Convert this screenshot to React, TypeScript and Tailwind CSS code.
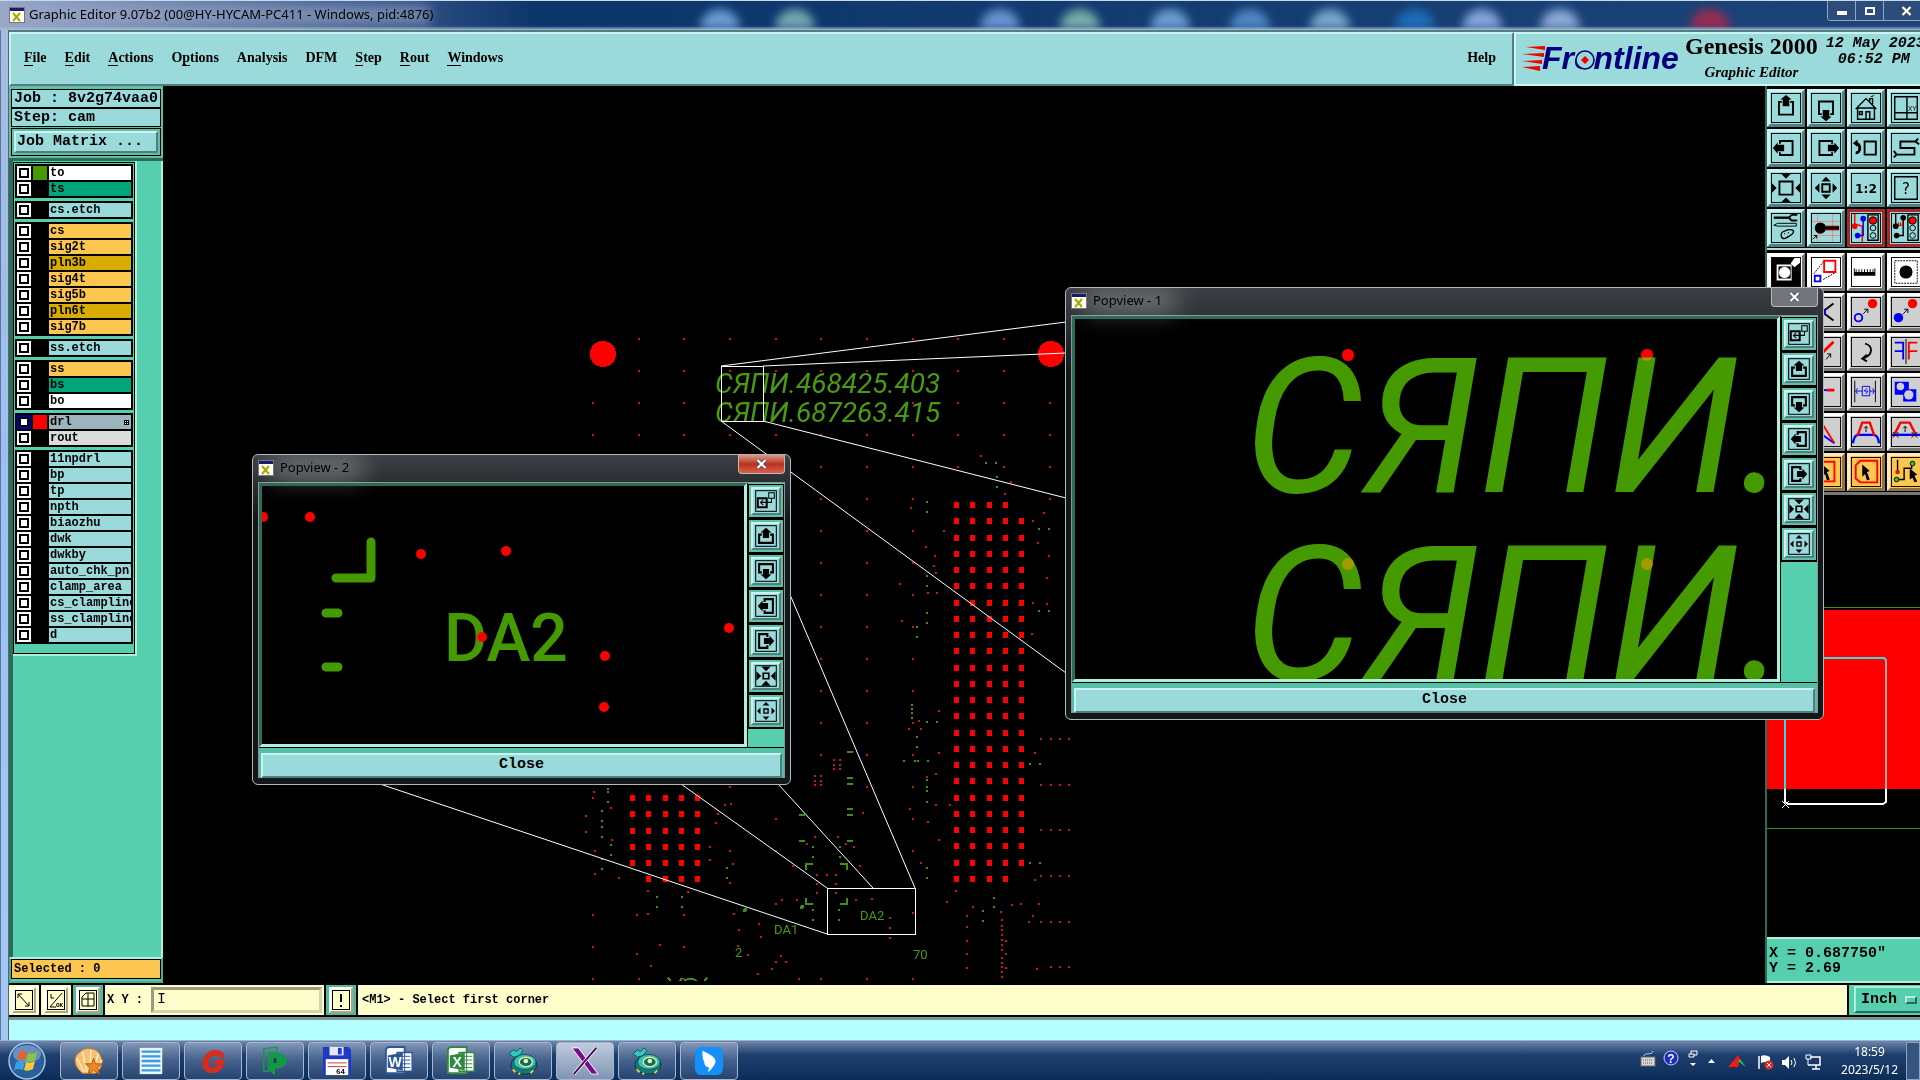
import type { ReactNode } from "react";

const MONO = "font-['Liberation_Mono',monospace] font-bold";
const SERIF = "font-['Liberation_Serif',serif] font-bold";
const SANS = "font-['Noto_Sans',sans-serif]";
const RAISED = "border-2 border-t-[#c8f5f1] border-l-[#c8f5f1] border-r-[#4f7f7f] border-b-[#4f7f7f]";

type Point = [number, number];

/* ---------- board data ---------- */

const RED_DOTS: Point[] = [
  [981, 456], [1011, 482], [1005, 494], [1044, 513], [1033, 521], [1038, 543], [1049, 556], [1047, 578],
  [1033, 603], [1047, 604], [1032, 634], [911, 508], [944, 531], [926, 547], [935, 556], [934, 566],
  [936, 573], [928, 593], [937, 593], [900, 584], [902, 621], [939, 711], [913, 723], [919, 721],
  [909, 729], [921, 729], [939, 753], [936, 774], [927, 777], [910, 809], [936, 805], [950, 805],
  [928, 822], [939, 840], [921, 863], [863, 813], [860, 866], [815, 837], [838, 837], [807, 844],
  [846, 844], [854, 847], [793, 866], [817, 875], [827, 875], [836, 875], [817, 884], [836, 884],
  [817, 893], [836, 893], [834, 760], [840, 760], [834, 765], [840, 765], [834, 769], [840, 769],
  [815, 776], [821, 776], [815, 781], [821, 781], [815, 785], [821, 785], [594, 792], [593, 798],
  [611, 808], [586, 816], [586, 832], [612, 840], [595, 851], [595, 874], [619, 878], [725, 805],
  [731, 804], [718, 814], [716, 823], [710, 847], [710, 860], [730, 851], [733, 864], [730, 883],
  [730, 787], [648, 891], [688, 892], [648, 914], [637, 915], [734, 914], [776, 904], [782, 900],
  [797, 900], [759, 924], [739, 930], [761, 937], [738, 946], [660, 945], [637, 954], [651, 966],
  [748, 955], [781, 956], [776, 962], [786, 962], [772, 969], [758, 974], [799, 979], [856, 900],
  [872, 899], [890, 918], [890, 928], [890, 938], [913, 913], [956, 891], [947, 902], [973, 907],
  [1012, 905], [1021, 904], [1039, 904], [1001, 912], [967, 916], [967, 927], [967, 941], [967, 954],
  [967, 968], [1033, 916], [1029, 922], [1035, 753], [1035, 880], [1037, 969], [1006, 941], [1006, 954],
  [1006, 968], [1002, 920], [1002, 926], [1002, 930], [1002, 935], [1002, 940], [1002, 945], [1002, 950],
  [1002, 958], [1002, 963], [1002, 967], [1002, 972], [1002, 977],
];

const GREEN_DOTS: Point[] = [
  [986, 463], [996, 463], [997, 477], [997, 487], [927, 502], [927, 512], [1039, 529], [1049, 529],
  [927, 576], [927, 586], [927, 613], [927, 623], [917, 627], [917, 637], [1039, 611], [1049, 611],
  [912, 705], [912, 709], [912, 713], [912, 718], [927, 722], [937, 722], [917, 737], [917, 747],
  [904, 761], [915, 761], [918, 761], [928, 761], [927, 780], [927, 787], [927, 791], [927, 802],
  [927, 868], [927, 878], [1030, 764], [1040, 764], [1030, 863], [1040, 863], [994, 898], [994, 907],
  [983, 911], [983, 921], [813, 847], [813, 857], [840, 847], [840, 857], [813, 910], [813, 920],
  [839, 910], [839, 920], [608, 789], [608, 792], [608, 802], [602, 811], [602, 821], [602, 827],
  [602, 837], [611, 845], [611, 855], [602, 859], [602, 869], [727, 868], [727, 878], [657, 897],
  [657, 907], [682, 897], [682, 907],
];

const GREEN_DASHES: Point[] = [
  [850, 752], [850, 778], [850, 784], [850, 809], [850, 815], [850, 841], [802, 815], [802, 841],
];

// via grid: row y -> column x values
const GRID: [number, number[]][] = [
  [339, [639, 684, 730, 776, 821, 867, 913, 958, 1004]],
  [371, [639, 684, 730, 776, 821, 867, 913, 958, 1004]],
  [403, [593, 639, 684, 730, 776, 821, 867, 913, 958, 1004, 1050]],
  [435, [593, 639, 684, 730, 776, 821, 867, 913, 958, 1004, 1050]],
  [467, [821, 867, 913, 958, 1004, 1050]],
  [499, [821, 867, 913, 1050]],
  [531, [821, 867, 913]],
  [563, [821, 867, 913]],
  [595, [821, 867, 913]],
  [627, [821, 867, 913]],
  [659, [821, 867, 913]],
  [691, [821, 867, 913]],
  [723, [821, 867]],
  [755, [821, 867, 913]],
  [787, [867, 913]],
  [819, [776, 913]],
  [851, [776, 913]],
  [915, [593, 684]],
  [947, [593, 684]],
  [979, [593, 639, 684, 821, 867, 913]],
];

const HEADER_ROWS = [739, 785, 830, 876, 922, 967];

const LINES: [number, number, number, number][] = [
  [721, 366, 1066, 322],
  [763, 366, 1066, 353],
  [721, 421, 1066, 673],
  [763, 421, 1066, 498],
  [380, 784, 827, 934],
  [681, 784, 827, 888],
  [778, 784, 873, 888],
  [788, 590, 915, 888],
];

function Board() {
  const pads: Point[] = [];
  for (let r = 0; r < 24; r++) {
    for (let c = 0; c < 5; c++) {
      if (c === 4 && (r === 0 || r === 23)) continue;
      pads.push([956 + Math.round(c * 16.3), 505 + Math.round(r * 16.25)]);
    }
  }
  for (let r = 0; r < 6; r++) {
    for (let c = 0; c < 5; c++) {
      if (c === 0 && r === 5) continue;
      pads.push([632 + Math.round(c * 16.3), 798 + Math.round(r * 16.25)]);
    }
  }
  return (
    <svg className="absolute inset-0 h-full w-full" shapeRendering="crispEdges">
      <g transform="translate(-163 -86)">
        <g fill="#c4161c">
          {GRID.flatMap(([y, xs]) => xs.map((x) => <rect key={`${x}-${y}`} x={x - 1} y={y - 1} width="2" height="2" />))}
          {HEADER_ROWS.flatMap((y, i) =>
            [1041, 1051, 1060, 1069].slice(i === 5 ? 1 : 0).map((x) => (
              <rect key={`${x}-${y}`} x={x - 1} y={y - 1} width="2" height="2" />
            )),
          )}
          {RED_DOTS.map(([x, y]) => (
            <rect key={`${x}-${y}`} x={x - 1} y={y - 1} width="2" height="2" />
          ))}
        </g>
        <g fill="#ff0000">
          {pads.map(([x, y]) => (
            <rect key={`${x}-${y}`} x={x - 2} y={y - 3} width="5" height="6" />
          ))}
          <circle cx="603" cy="354" r="13" />
          <circle cx="1051" cy="354" r="13" />
        </g>
        <g fill="#3f8f10">
          {GREEN_DOTS.map(([x, y]) => (
            <rect key={`${x}-${y}`} x={x - 1} y={y - 1} width="2" height="2" />
          ))}
          {GREEN_DASHES.map(([x, y]) => (
            <rect key={`${x}-${y}`} x={x - 3} y={y - 1} width="6" height="2" />
          ))}
          <circle cx="802" cy="907" r="2" />
          <circle cx="745" cy="910" r="2" />
        </g>
        <g fill="none" stroke="#3f8f10" strokeWidth="2">
          <path d="M813 864h-7v6M840 864h7v6M806 898v6h7M847 898v6h-7" />
          <path d="M668 978l3 3M682 978l-2 3M685 981c2-3 9-3 11 0M704 981l3-3" />
        </g>
        <g fill="#4a9a0e" shapeRendering="auto" className="font-['Roboto',sans-serif]">
          <text x="715" y="393" className="text-[28px] italic">СЯПИ.468425.403</text>
          <text x="715" y="422" className="text-[28px] italic">СЯПИ.687263.415</text>
          <text x="860" y="920" className="text-[13px]">DA2</text>
          <text x="774" y="934" className="text-[13px]">DA1</text>
          <text x="735" y="957" className="text-[13px]">2</text>
          <text x="913" y="959" className="text-[13px]">70</text>
        </g>
        <g fill="none" stroke="#ffffff" strokeWidth="1" shapeRendering="auto">
          {LINES.map(([x1, y1, x2, y2]) => (
            <line key={`${x1}-${y1}-${y2}`} x1={x1} y1={y1} x2={x2} y2={y2} />
          ))}
          <rect x="721.5" y="366.5" width="42" height="55" />
          <rect x="827.5" y="888.5" width="88" height="46" />
        </g>
      </g>
    </svg>
  );
}

/* ---------- tool icons, 32x32 each ---------- */

const arrowBox = (
  <>
    <path d="M11.5 9.5H8.5v13.500h15V9.500h-3" fill="none" stroke="#000" strokeWidth="2" />
    <path d="M16 2l6 5h-2.500v7h-7V7H10z" />
  </>
);

const smallArrowBox = (
  <>
    <path d="M10 14H6v12h20V14h-4" fill="none" stroke="#000" strokeWidth="3" />
    <path d="M16 4l8 7h-3.500v8h-9v-8H8z" />
  </>
);

const ICONS: Record<string, ReactNode> = {
  up: arrowBox,
  down: <g transform="rotate(180 16 16)">{arrowBox}</g>,
  left: <g transform="rotate(270 16 16)">{arrowBox}</g>,
  right: <g transform="rotate(90 16 16)">{arrowBox}</g>,
  popUp: smallArrowBox,
  popDown: <g transform="rotate(180 16 16)">{smallArrowBox}</g>,
  popLeft: <g transform="rotate(270 16 16)">{smallArrowBox}</g>,
  popRight: <g transform="rotate(90 16 16)">{smallArrowBox}</g>,
  popIn: (
    <>
      <path d="M12 12h8v8h-8z" fill="none" stroke="#000" strokeWidth="2.500" />
      <path d="M9 2h14l-7 7zM9 30h14l-7-7zM2 9v14l7-7zM30 9v14l-7-7z" />
    </>
  ),
  popFit: (
    <>
      <path d="M13 13h6v6h-6z" fill="none" stroke="#000" strokeWidth="2" />
      <path d="M11 8h10l-5-5zM11 24h10l-5 5zM8 11v10l-5-5zM24 11v10l5-5z" />
    </>
  ),
  home: (
    <g fill="none" stroke="#000" strokeWidth="1.500">
      <path d="M5 17L16 6l11 11M7 16v12h18V16M7 16h18M16 28v-8h4v8M9 20h3v3H9zM20 9V6h3v6" />
      <path d="M21 4q3 0 3-2" strokeWidth="1" />
    </g>
  ),
  xy: (
    <>
      <path d="M4 4h24v24H4zM4 21h24M17 4v24" fill="none" stroke="#000" strokeWidth="1.500" />
      <text x="18" y="19" className="font-['Liberation_Sans'] text-[7px]">XY</text>
    </>
  ),
  undo: (
    <>
      <path d="M14.500 9h12v14h-12z" fill="none" stroke="#000" strokeWidth="2" />
      <path d="M5 21c5 1 6-8 1-10" fill="none" stroke="#000" strokeWidth="3" />
      <path d="M2 11l5-4v8z" />
    </>
  ),
  snake: (
    <path d="M29 6l-3 3H10v7h15v7H6l-3 3M26 9l4 3M6 23l-3-4" fill="none" stroke="#000" strokeWidth="2" />
  ),
  zoomIn: (
    <>
      <path d="M9 9h14v14H9z" fill="none" stroke="#000" strokeWidth="2" />
      <path d="M11 1h10l-5 5zM11 31h10l-5-5zM1 11v10l5-5zM31 11v10l-5-5z" />
    </>
  ),
  zoomOut: (
    <>
      <path d="M12 12h8v8h-8z" fill="none" stroke="#000" strokeWidth="2" />
      <path d="M11 9h10l-5-5zM11 23h10l-5 5zM9 11v10l-5-5zM23 11v10l5-5z" />
    </>
  ),
  ratio: (
    <text x="16" y="21" textAnchor="middle" className="font-['DejaVu_Sans'] text-[13px] font-bold">1:2</text>
  ),
  help: (
    <>
      <path d="M4 4h24v24H4z" fill="none" stroke="#000" strokeWidth="1.500" />
      <text x="16" y="22" textAnchor="middle" className="font-['DejaVu_Sans'] text-[16px]">?</text>
    </>
  ),
  tools: (
    <g fill="none" stroke="#000">
      <path d="M3 5h17" strokeWidth="2.500" />
      <path d="M28 2h-6l-3 3 3 3h6" strokeWidth="2" />
      <path d="M3 13l4-2h20v3H7z" />
      <path d="M15 19c7-3 12 0 7 4s-10 6-11 2 1-5 4-6zM14 22h1M18 21h1M17 25h1" strokeWidth="1.500" />
    </g>
  ),
  pin: (
    <>
      <path d="M7 1v30M23 1v30M1 9h30M1 24h30" stroke="#e88" fill="none" />
      <circle cx="10" cy="16" r="6" />
      <path d="M15 16h15" stroke="#c00" strokeWidth="5" />
      <path d="M10 16h20" stroke="#000" strokeWidth="3" />
      <path d="M2 28l4-4m-3 0h3v3" stroke="#000" fill="none" />
    </>
  ),
  netColor: (
    <>
      <path d="M4 1v11l8 2v17" stroke="#f00" fill="none" strokeWidth="1.500" />
      <path d="M13 6v18H6" stroke="#00d" fill="none" strokeWidth="1.500" />
      <circle cx="4" cy="14" r="3" fill="#f00" />
      <circle cx="13" cy="6" r="3" fill="#00d" />
      <circle cx="7" cy="24" r="3" fill="#00d" />
      <path d="M18 2h11v27H18z" fill="none" stroke="#000" strokeWidth="1.500" />
      <circle cx="23.500" cy="8" r="4" fill="#f00" stroke="#000" />
      <circle cx="23.500" cy="16" r="3" fill="none" stroke="#000" />
      <circle cx="23.500" cy="24" r="3" fill="none" stroke="#000" />
    </>
  ),
  netBlack: (
    <>
      <path d="M5 1v14M13 5v19H6" stroke="#000" fill="none" strokeWidth="1.500" />
      <path d="M5 13h8M8 10v4M10 10v4M12 10v4" stroke="#d00" fill="none" />
      <circle cx="5" cy="14" r="3" />
      <circle cx="13" cy="5" r="3" />
      <circle cx="6" cy="24" r="3" />
      <path d="M18 2h11v27H18z" fill="none" stroke="#000" strokeWidth="1.500" />
      <circle cx="23" cy="8" r="4" fill="#f00" stroke="#000" />
      <circle cx="23" cy="16" r="3" fill="none" stroke="#000" />
      <circle cx="23" cy="24" r="3" fill="none" stroke="#000" />
    </>
  ),
  mask: (
    <>
      <path d="M1 1h30v30H1z" />
      <path d="M25 1h6v5l-6 5-4-4zM6 8h16v17H6z" fill="#fff" />
      <path d="M8 10h13v13H8z" />
      <circle cx="14.500" cy="16.500" r="6" fill="#fff" />
    </>
  ),
  scale: (
    <>
      <path d="M3 18L14 4M13 24l14-8" stroke="#000" fill="none" strokeDasharray="2 1" />
      <path d="M14 4h12v12H14z" fill="none" stroke="#f00" strokeWidth="2" />
      <path d="M4 20h6v6H4z" fill="none" stroke="#00f" strokeWidth="2" />
    </>
  ),
  ruler: <path d="M3 20V12h1v4h1v-3h1v3h2v-3h1v3h2v-3h1v3h2v-3h1v3h2v-3h1v3h2v-3h1v3h2v-3h1v3h1v-4h1v8z" />,
  pad: (
    <>
      <path d="M4 4h24v24H4z" fill="none" stroke="#000" strokeDasharray="2 1" />
      <circle cx="16" cy="16" r="7" />
    </>
  ),
  cross: (
    <>
      <path d="M7 16h9" stroke="#00f" strokeWidth="4" />
      <path d="M12 16l12-9M12 16l12 9" stroke="#000" strokeWidth="2" />
      <circle cx="12" cy="16" r="4" fill="#00f" />
    </>
  ),
  copyOpen: (
    <>
      <circle cx="23" cy="7" r="5" fill="#f00" />
      <circle cx="8" cy="22" r="4" fill="none" stroke="#00f" strokeWidth="2" />
      <path d="M13 18l5-5m-4 0h4v4" stroke="#000" fill="none" />
    </>
  ),
  copyFill: (
    <>
      <circle cx="23" cy="7" r="5" fill="#f00" />
      <circle cx="8" cy="22" r="5" fill="#00f" />
      <path d="M13 18l5-5m-4 0h4v4" stroke="#000" fill="none" />
    </>
  ),
  slash: (
    <>
      <path d="M10 19L24 5" stroke="#f00" strokeWidth="3" />
      <path d="M16 24l5-6m-4 0h4v4" stroke="#000" fill="none" />
    </>
  ),
  rotate: <path d="M15 7c9 2 9 13-3 16m5-4l-5 4 5 3" fill="none" stroke="#000" strokeWidth="2" />,
  mirror: (
    <>
      <path d="M4 6h9v18M4 15h9" fill="none" stroke="#00f" strokeWidth="2" />
      <path d="M16 2v27" stroke="#000" />
      <path d="M28 6h-9v18M19 15h9" fill="none" stroke="#f00" strokeWidth="2" />
    </>
  ),
  bar: (
    <>
      <path d="M2 14h16" stroke="#00f" strokeWidth="2" />
      <path d="M17 14h8" stroke="#f00" strokeWidth="3" />
    </>
  ),
  stretch: (
    <g fill="none" stroke="#00f">
      <path d="M4 4v23M26 4v23" stroke="#000" />
      <path d="M12 10h8v10h-8zM5 15h7M20 15h5M7 12l-2 3 2 3M23 12l2 3-2 3M17 12l-3 3h4l-2 3" />
    </g>
  ),
  union: (
    <>
      <path d="M4 5h15v8h8v13H13v-7H4z" fill="#00f" />
      <circle cx="10" cy="10" r="4" fill="#cfcfcf" />
      <circle cx="19" cy="19" r="5" fill="#cfcfcf" />
    </>
  ),
  slope: (
    <>
      <path d="M5 14L25 28" stroke="#00f" strokeWidth="2" />
      <path d="M10 4l15 24" stroke="#f00" strokeWidth="2" />
    </>
  ),
  arch: (
    <>
      <path d="M2 28c1-7 3-9 6-9h16c3 0 5 2 6 9" fill="none" stroke="#00f" strokeWidth="2.500" />
      <path d="M7 20l5-14h8l5 14" fill="none" stroke="#f00" strokeWidth="2.500" />
      <path d="M16 16v-6m-2 2l2-2 2 2" stroke="#000" fill="none" />
    </>
  ),
  archLine: (
    <>
      <path d="M1 19h30" stroke="#00f" strokeWidth="2.500" />
      <path d="M4 18l6-12h10l6 12" fill="none" stroke="#f00" strokeWidth="2.500" />
      <path d="M15 16v-6m-2 2l2-2 2 2M2 16l6 6M8 16l-6 6M22 16l6 6M28 16l-6 6" stroke="#000" fill="none" />
    </>
  ),
  pickBox: (
    <>
      <path d="M5 5h20v21H5z" fill="none" stroke="#f00" strokeWidth="2" />
      <path d="M12 8l8 7-3 1 3 8-3 1-2-7-3 3z" />
    </>
  ),
  pickPoly: (
    <>
      <path d="M10 4h18v23H10l-5-4V9z" fill="none" stroke="#f00" strokeWidth="2" />
      <path d="M12 8l8 7-3 1 3 8-3 1-2-7-3 3z" />
    </>
  ),
  pickNet: (
    <>
      <path d="M7 3v12M6 24h8V12h8V7" fill="none" stroke="#000" strokeWidth="1.500" />
      <circle cx="7" cy="16" r="2.500" fill="#c22" />
      <circle cx="6" cy="24" r="2.500" fill="#2c2" stroke="#000" />
      <circle cx="23" cy="7" r="2.500" fill="#2c2" stroke="#000" />
      <path d="M20 12l8 7-3 1 3 6-3 1-2-5-3 2z" />
    </>
  ),
  popOut: (
    <g fill="none" stroke="#000" strokeWidth="2">
      <path d="M4 12h13v13H4z" strokeWidth="3" />
      <path d="M20 4h8v8h-8zM16 18h8v-6M8 18h8M12 14l-4 4 4 4" strokeWidth="1.500" />
    </g>
  ),
};

type Tone = "cyan" | "alert" | "white" | "grey" | "orange";

const TONES: Record<Tone, string> = {
  cyan: "bg-[#9bdada] border-t-[#c8f5f1] border-l-[#c8f5f1] border-r-[#4f7f7f] border-b-[#4f7f7f]",
  alert: "bg-[#9bdada] border-[#a82828]",
  white: "bg-white border-t-white border-l-white border-r-[#777] border-b-[#777]",
  grey: "bg-[#cfcfcf] border-t-white border-l-white border-r-[#777] border-b-[#777]",
  orange: "bg-[#fdc650] border-t-[#ffe9bb] border-l-[#ffe9bb] border-r-[#8e7340] border-b-[#8e7340]",
};

function ToolButton({ icon, tone = "cyan" }: { icon: string; tone?: Tone }) {
  return (
    <button aria-label={icon} className={`flex h-[38px] w-[38px] items-center justify-center border-3 ${TONES[tone]}`}>
      <svg width="30" height="30" viewBox="0 0 32 32">
        <rect x="0.5" y="0.5" width="31" height="31" fill="none" stroke="#000" />
        {ICONS[icon]}
      </svg>
    </button>
  );
}

const TOP_TOOLS: [string, Tone][] = [
  ["up", "cyan"], ["down", "cyan"], ["home", "cyan"], ["xy", "cyan"],
  ["left", "cyan"], ["right", "cyan"], ["undo", "cyan"], ["snake", "cyan"],
  ["zoomIn", "cyan"], ["zoomOut", "cyan"], ["ratio", "cyan"], ["help", "cyan"],
  ["tools", "cyan"], ["pin", "cyan"], ["netColor", "alert"], ["netBlack", "alert"],
];

const EDIT_TOOLS: [string, Tone][] = [
  ["mask", "white"], ["scale", "white"], ["ruler", "white"], ["pad", "white"],
  ["copyOpen", "grey"], ["cross", "grey"], ["copyOpen", "grey"], ["copyFill", "grey"],
  ["slash", "grey"], ["slash", "grey"], ["rotate", "grey"], ["mirror", "grey"],
  ["bar", "grey"], ["bar", "grey"], ["stretch", "grey"], ["union", "grey"],
  ["slope", "grey"], ["slope", "grey"], ["arch", "grey"], ["archLine", "grey"],
  ["pickBox", "orange"], ["pickBox", "orange"], ["pickPoly", "orange"], ["pickNet", "orange"],
];

/* ---------- title bar and menus ---------- */

function AppIcon() {
  return (
    <svg width="16" height="16" viewBox="0 0 16 16" className="shrink-0">
      <rect x="0.5" y="0.5" width="15" height="15" fill="#fffff4" stroke="#777" />
      <rect x="1" y="1" width="14" height="3" fill="#1a1a6e" />
      <path d="M4 6l7 8M11 6l-7 8" stroke="#a8a800" strokeWidth="2" />
    </svg>
  );
}

const BLOBS = [
  "left-[700px] bg-[#7fb4e8]", "left-[775px] bg-[#8fc0c0]", "left-[980px] bg-[#7fa8e8]",
  "left-[1060px] bg-[#8fc8b8]", "left-[1150px] bg-[#7fb4e8]", "left-[1230px] bg-[#5f98d8]",
  "left-[1310px] bg-[#8fc0e0]", "left-[1395px] bg-[#1f78c8]", "left-[1462px] bg-[#a0bcf8]",
  "left-[1540px] bg-[#a8c4f0]", "left-[1690px] bg-[#b82848]",
];

function TitleBar() {
  return (
    <header className="relative flex h-[30px] shrink-0 items-center overflow-hidden border-t border-[#c8d8ee] bg-linear-to-r from-[#9aa8c8] via-[#0c356c] via-28% to-[#1c4478] pb-[2px] pl-[9px]">
      <i className="absolute top-1 left-0 h-5 w-[430px] bg-[#9aa8c8]/60 blur-[6px]" />
      {BLOBS.map((b) => (
        <i key={b} className={`absolute top-2 h-5 w-10 rounded-t-full opacity-80 blur-[5px] ${b}`} />
      ))}
      <i className="absolute bottom-0 left-0 h-1 w-full bg-linear-to-b from-transparent to-[#a9bcd8]" />
      <div className="relative flex items-center gap-1">
        <AppIcon />
        <span className={`${SANS} text-[13px] text-black`}>
          Graphic Editor 9.07b2 (00@HY-HYCAM-PC411 - Windows, pid:4876)
        </span>
      </div>
      <div className="relative ml-auto flex h-5 self-start overflow-hidden rounded-bl border border-t-0 border-r-0 border-[#8fa6c8] text-white">
        <button aria-label="Minimize" className="flex w-7 items-center justify-center border-r border-[#8fa6c8] bg-[#2c4c7c]">
          <i className="mt-1 h-1 w-2.5 bg-white" />
        </button>
        <button aria-label="Restore" className="flex w-7 items-center justify-center border-r border-[#8fa6c8] bg-[#2c4c7c]">
          <i className="h-2 w-2.5 border-2 border-white" />
        </button>
        <button aria-label="Close window" className="flex w-9 items-center justify-center bg-[#2c4c7c] pl-2">
          <CloseMark />
        </button>
      </div>
    </header>
  );
}

function CloseMark() {
  return (
    <svg width="11" height="10" viewBox="0 0 11 10">
      <path d="M1.500 1l8 8M9.500 1l-8 8" stroke="#445" strokeWidth="3.500" />
      <path d="M1.500 1l8 8M9.500 1l-8 8" stroke="#fff" strokeWidth="2.200" />
    </svg>
  );
}

const MENUS: [string, string, string][] = [
  ["", "F", "ile"], ["", "E", "dit"], ["", "A", "ctions"], ["O", "p", "tions"], ["Analysis", "", ""],
  ["DFM", "", ""], ["", "S", "tep"], ["", "R", "out"], ["", "W", "indows"],
];

function MenuBar() {
  return (
    <div className="flex h-[56px] shrink-0 bg-[#4f7f7f] pt-[2px]">
      <nav className={`${SERIF} flex flex-1 items-center bg-[#9bdada] text-[14px] leading-4 ${RAISED} pr-4 pb-[2px] pl-[13px]`}>
        <div className="flex items-center gap-[18px]">
          {MENUS.map(([pre, key, post]) => (
            <button key={pre + key + post}>
              {pre}
              {key && <span className="border-b border-black">{key}</span>}
              {post}
            </button>
          ))}
        </div>
        <button className="ml-auto">Help</button>
      </nav>
      <div className={`flex w-[406px] shrink-0 overflow-hidden bg-[#9bdada] pl-[5px] ${RAISED} border-r-0 border-b-[#c8f5f1]`}>
        <svg width="164" height="50" viewBox="0 0 164 50" className="shrink-0" aria-label="Frontline">
          <path d="M5 13l19-1v4zM1 20l22-1v4zM1 27l20-1v4zM1 33l18-1v5z" fill="#f00000" />
          <text x="21" y="35" fill="#00007e" className="font-['Liberation_Sans'] text-[32px] font-bold italic">
            Frontline
          </text>
          <circle cx="64" cy="26" r="9" fill="#9bdada" stroke="#00007e" strokeWidth="1.500" />
          <path d="M64 22l4 4-4 4-4-4z" fill="#f00000" />
        </svg>
        <div className={`${SERIF} flex shrink-0 flex-col items-center whitespace-nowrap`}>
          <span className="text-2xl leading-6">Genesis 2000</span>
          <span className="text-[15px] leading-7 italic">Graphic Editor</span>
        </div>
        <div className={`${MONO} ml-2 w-[100px] shrink-0 pt-[2px] text-[15px] leading-4 whitespace-nowrap italic`}>
          <p>12 May 2023</p>
          <p className="pl-3">06:52 PM</p>
        </div>
      </div>
    </div>
  );
}

/* ---------- layer list ---------- */

type Layer = { name: string; bg: string; swatch?: string; active?: boolean };

const CYAN = "bg-[#9bdada]";
const AMBER = "bg-[#fdc650]";
const GOLD = "bg-[#d8ac00]";
const TEAL = "bg-[#00a57b]";

const LAYER_GROUPS: Layer[][] = [
  [{ name: "to", bg: "bg-white", swatch: "bg-[#449a00]" }, { name: "ts", bg: TEAL }],
  [{ name: "cs.etch", bg: CYAN }],
  [
    { name: "cs", bg: AMBER },
    { name: "sig2t", bg: AMBER },
    { name: "pln3b", bg: GOLD },
    { name: "sig4t", bg: AMBER },
    { name: "sig5b", bg: AMBER },
    { name: "pln6t", bg: GOLD },
    { name: "sig7b", bg: AMBER },
  ],
  [{ name: "ss.etch", bg: CYAN }],
  [{ name: "ss", bg: AMBER }, { name: "bs", bg: TEAL }, { name: "bo", bg: "bg-white" }],
  [
    { name: "drl", bg: "bg-[#9cb4be]", swatch: "bg-[#ff0000]", active: true },
    { name: "rout", bg: "bg-[#dcdcdc]" },
  ],
  ["11npdrl", "bp", "tp", "npth", "biaozhu", "dwk", "dwkby", "auto_chk_pnl", "clamp_area", "cs_clampline", "ss_clampline", "d"].map(
    (name) => ({ name, bg: CYAN }),
  ),
];

function LayerRow({ layer }: { layer: Layer }) {
  return (
    <label className="flex h-4 items-center gap-[2px] px-px">
      <span className={`flex h-[14px] w-[14px] shrink-0 items-center justify-center ${layer.active ? "bg-[#0000a0]" : "bg-white"}`}>
        <input type="checkbox" className="h-[10px] w-[10px] appearance-none border-2 border-black bg-white" />
      </span>
      <span className={`h-[14px] w-[14px] shrink-0 ${layer.swatch ?? "bg-black"}`} />
      <span className={`${MONO} h-[14px] flex-1 overflow-hidden pl-px text-xs leading-[14px] whitespace-nowrap ${layer.bg}`}>
        {layer.name}
      </span>
      {layer.active && (
        <svg width="5" height="5" viewBox="0 0 5 5" className="-ml-[9px] mr-[2px] shrink-0">
          <rect width="5" height="5" fill="#000" />
          <path d="M1 1h1v1H1zM3 1h1v1H3zM1 3h1v1H1zM3 3h1v1H3z" fill="#dde" />
        </svg>
      )}
    </label>
  );
}

function LeftPanel() {
  return (
    <aside className={`${MONO} flex w-[154px] shrink-0 flex-col bg-[#55cfae] text-[15px]`}>
      <div className="flex flex-col gap-px border-b-3 border-[#2c6a5a] bg-[#62bfa6] p-[2px] pt-[3px]">
        <div className="border border-black bg-[#9bdada]">
          <p className="h-[19px] border-b-2 border-black pl-[2px] leading-[18px] whitespace-nowrap">Job : 8v2g74vaa0</p>
          <p className="h-[17px] pl-[2px] leading-[18px]">Step: cam</p>
        </div>
        <div className="border border-black p-[2px]">
          <button className={`block h-[22px] w-full bg-[#9bdada] pl-px text-left leading-[18px] whitespace-nowrap ${RAISED}`}>
            Job Matrix ...
          </button>
        </div>
      </div>
      <div className="flex flex-1 flex-col items-start border-r-2 border-l-4 border-r-[#b0efdc] border-l-[#2c6a5a]">
        <div className="border-r-2 border-b-2 border-[#b0efdc] pt-px">
          <div className="flex w-[122px] flex-col gap-[3px] border border-black px-px pt-px pb-[9px]">
            {LAYER_GROUPS.map((group) => (
              <div key={group[0].name} className="border border-black bg-black">
                {group.map((layer) => (
                  <LayerRow key={layer.name} layer={layer} />
                ))}
              </div>
            ))}
          </div>
        </div>
      </div>
      <div className="h-[26px] border-2 border-t-[#b0efdc] border-[#55a890] pb-[2px]">
        <p className="h-5 border border-black bg-[#fdc650] pl-[2px] text-xs leading-[18px]">Selected : 0</p>
      </div>
    </aside>
  );
}

function RightPanel() {
  return (
    <aside className="flex w-[155px] shrink-0 flex-col overflow-hidden border-l-2 border-[#2c6a5a] bg-black">
      <div className="grid shrink-0 grid-cols-[repeat(4,38px)] gap-[2px] bg-black pt-[3px]">
        {TOP_TOOLS.map(([icon, tone], i) => (
          <ToolButton key={i} icon={icon} tone={tone} />
        ))}
      </div>
      <div className="mt-px grid shrink-0 grid-cols-[repeat(4,38px)] gap-[2px] border-t-2 border-b-3 border-t-[#b8d8d4] border-b-[#777] bg-black pt-[3px] pb-px">
        {EDIT_TOOLS.map(([icon, tone], i) => (
          <ToolButton key={i} icon={icon} tone={tone} />
        ))}
      </div>
      <svg className="min-h-0 w-full flex-1" viewBox="1767 520 153 416" preserveAspectRatio="xMinYMax meet" overflow="visible">
        <rect x="1767" y="609" width="153" height="179" fill="#ff0000" />
        <path d="M1767 606.500h153M1767 827.500h153" stroke="#3f8f10" />
        <g fill="none" strokeWidth="2">
          <path d="M1785 788V657h99l2 2v129" stroke="#3fd8d8" />
          <path d="M1886 660v128" stroke="#a8a8a8" />
          <path d="M1785 788v13l3 2h95l3-2v-13" stroke="#ffffff" />
        </g>
        <path d="M1782 800l7 7M1789 800l-7 7" stroke="#ffffff" />
      </svg>
      <div className={`${MONO} h-[46px] shrink-0 border-y-2 border-[#b0efdc] bg-[#55cfae] pt-[7px] pl-[2px] text-[15px] leading-[15px] whitespace-pre`}>
        <p>X = 0.687750"</p>
        <p>Y = 2.69</p>
      </div>
    </aside>
  );
}

/* ---------- pop-up views ---------- */

const POP_TOOLS = ["popOut", "popUp", "popDown", "popLeft", "popRight", "popIn", "popFit"];

type PopviewProps = { title: string; frame: string; closeClass: string; children: ReactNode };

function Popview({ title, frame, closeClass, children }: PopviewProps) {
  return (
    <section
      className={`absolute flex flex-col overflow-hidden rounded-md border border-[#b4b8bc] bg-linear-to-b from-[#3c4044] to-[#14171a] to-20% px-[5px] pb-[6px] ${frame}`}
    >
      <i className="absolute top-1 left-4 h-5 w-24 rounded-full bg-white/35 blur-md" />
      <div className="relative flex h-[27px] shrink-0 items-center gap-1.5 pb-[2px]">
        <AppIcon />
        <h2 className={`${SANS} text-[13px] text-black`}>{title}</h2>
        <button
          aria-label={`Close ${title}`}
          className={`ml-auto flex h-[19px] w-[47px] items-center justify-center self-start rounded-b border border-t-0 border-[#c0b8b8] ${closeClass}`}
        >
          <CloseMark />
        </button>
      </div>
      <div className="flex min-h-0 flex-1 flex-col border border-[#8c9494] bg-black">
        <div className="flex min-h-0 flex-1">
          <div className="relative min-w-0 flex-1 border-3 border-t-[#2c6a5a] border-r-[#b0efdc] border-b-[#b0efdc] border-l-[#2c6a5a]">
            {children}
          </div>
          <div className="ml-px flex w-[36px] shrink-0 flex-col bg-[#55cfae] pt-px">
            {POP_TOOLS.map((icon) => (
              <div key={icon} className="h-[35px] border border-b-2 border-black bg-[#62bfa6] p-[2px]">
                <button
                  aria-label={`${title} ${icon}`}
                  className={`flex h-full w-full items-center justify-center bg-[#9bdada] ${RAISED}`}
                >
                  <svg width="22" height="22" viewBox="0 0 32 32">
                    <rect x="1" y="1" width="30" height="30" fill="none" stroke="#000" strokeWidth="1.500" />
                    {ICONS[icon]}
                  </svg>
                </button>
              </div>
            ))}
          </div>
        </div>
        <div className="mt-px h-[29px] shrink-0 bg-[#55bfa6] p-[2px]">
          <button className={`${MONO} h-full w-full bg-[#9bdada] text-[15px] leading-5 ${RAISED}`}>Close</button>
        </div>
      </div>
    </section>
  );
}

const HITS_1: Point[] = [[1347, 355], [1646, 355], [1347, 564], [1646, 564]];
const HITS_2: Point[] = [[263, 517], [310, 517], [421, 554], [506, 551], [729, 628], [605, 656], [604, 707], [482, 637]];

function LegendView() {
  return (
    <svg className="absolute inset-0 h-full w-full">
      <g transform="translate(-1074 -319)">
        {HITS_1.map(([x, y]) => (
          <circle key={`${x}-${y}`} cx={x} cy={y} r="6" fill="#ff0000" />
        ))}
        <g fill="#449a00" className="font-['Roboto',sans-serif] text-[188px] italic">
          <text x="1243" y="492">СЯПИ.</text>
          <text x="1243" y="680">СЯПИ.</text>
        </g>
        {HITS_1.map(([x, y]) => (
          <circle key={`${x}-${y}`} cx={x} cy={y} r="6" fill="#800000" className="mix-blend-screen" />
        ))}
      </g>
    </svg>
  );
}

function DetailView() {
  return (
    <svg className="absolute inset-0 h-full w-full">
      <g transform="translate(-262 -486)">
        <path d="M371 542v36h-35" fill="none" stroke="#449a00" strokeWidth="9" strokeLinecap="round" strokeLinejoin="round" />
        <path d="M326 613h12M326 667h12" stroke="#449a00" strokeWidth="9" strokeLinecap="round" />
        <text x="444" y="661" fill="#449a00" className="font-['Roboto',sans-serif] text-[66px] font-medium">
          DA2
        </text>
        {HITS_2.map(([x, y]) => (
          <circle key={`${x}-${y}`} cx={x} cy={y} r="5" fill="#ff0000" />
        ))}
      </g>
    </svg>
  );
}

/* ---------- status row ---------- */

function StatusIcon({ label, active, children }: { label: string; active?: boolean; children: ReactNode }) {
  return (
    <div className={`flex items-center border-r-2 border-black px-[3px] ${active ? "bg-[#55b89c]" : ""}`}>
      <button aria-label={label} className="border-2 border-t-white border-l-white border-r-[#a8a888] border-b-[#a8a888] bg-[#fefecd]">
        <svg width="20" height="22" viewBox="0 0 20 22" fill="none" stroke="#000">
          <rect x="1.5" y="1.5" width="17" height="19" />
          {children}
        </svg>
      </button>
    </div>
  );
}

function StatusRow() {
  return (
    <div className={`${MONO} flex h-[34px] shrink-0 border-y-2 border-black bg-[#fefecd] text-xs`}>
      <StatusIcon label="Diagonal">
        <path d="M4 5l11 12M4 9V5h4M15 13v4h-4" />
      </StatusIcon>
      <StatusIcon label="Angle">
        <path d="M16 4L4 18h6M5 5v4h3" />
        <text x="10" y="18" fill="#000" stroke="none" className="text-[6px]">OK</text>
      </StatusIcon>
      <StatusIcon label="Snap" active>
        <path d="M4 10h12M10 4v14M4 17h12M16 4v13M4 8l4-4h8M4 8v9" />
      </StatusIcon>
      <label htmlFor="xy" className="w-[46px] pl-[2px] text-xs leading-[30px] whitespace-nowrap">X Y :</label>
      <input
        id="xy"
        className="my-[2px] w-[171px] border-3 border-t-[#9c9c7c] border-l-[#9c9c7c] border-r-[#d4d4ac] border-b-[#d4d4ac] bg-[#fefecd] px-[3px] text-[15px] font-normal"
        defaultValue="I"
      />
      <div className="ml-[2px] flex border-l-2 border-black">
        <StatusIcon label="Alert" active>
          <path d="M10 5v8M10 16v2" strokeWidth="2" />
        </StatusIcon>
      </div>
      <p className="flex-1 pl-1 leading-[30px]">&lt;M1&gt; - Select first corner</p>
      <div className="relative w-[73px] overflow-hidden border-l-2 border-black bg-[#55cfae] pt-px pl-[5px]">
        <select
          aria-label="Units"
          className="h-[27px] w-[80px] appearance-none border-2 border-t-[#b0efdc] border-l-[#b0efdc] border-b-[#2c6a5a] border-r-[#2c6a5a] bg-[#55cfae] pl-[5px] text-[15px] leading-5"
        >
          <option>Inch</option>
          <option>MM</option>
        </select>
        <i className="pointer-events-none absolute top-[11px] left-[56px] h-2 w-3 border-2 border-t-[#b0efdc] border-l-[#b0efdc] border-r-[#2c6a5a] border-b-[#2c6a5a]" />
      </div>
    </div>
  );
}

/* ---------- taskbar ---------- */

const gadget = (
  <>
    <ellipse cx="17" cy="20" rx="14" ry="10" fill="#137a78" stroke="#08383c" />
    <ellipse cx="18" cy="17" rx="12" ry="8" fill="#38c0b4" stroke="#0a5458" />
    <ellipse cx="19" cy="17" rx="7" ry="5" fill="#0d6a70" stroke="#f0e890" strokeWidth="1.500" />
    <circle cx="19" cy="16" r="2.500" fill="#e8f4a0" />
    <path d="M1 8l5-4 3 2 4-4 3 3-4 5-6 2z" fill="#34c8bc" stroke="#0a5458" />
    <path d="M5 25l3 3M11 29l2 1M27 26l-3 3" stroke="#f0c840" strokeWidth="2" />
  </>
);

const officeGrid = (color: string, letter: string) => (
  <>
    <path d="M2 5q0-4 4-4h16v28H2z" fill="#fff" stroke={color} strokeWidth="2" />
    <path d="M14 7h16v20H14z" fill="#fff" stroke={color} strokeWidth="1.500" />
    <path d="M17 11h11M17 15h11M17 19h11M17 23h11M22 7v20" stroke={color} />
    <path d="M4 10l16-3v19L4 23z" fill={color} />
    <text x="12" y="22" textAnchor="middle" fill="#fff" className="font-['Liberation_Sans'] text-[15px] font-bold">
      {letter}
    </text>
  </>
);

const TASKS: { name: string; active?: boolean; icon: ReactNode }[] = [
  {
    name: "Shell",
    icon: (
      <>
        <path d="M9 29C-2 20 0 10 6 7c3-4 8-5 11-4 6 0 9 3 11 7 4 6 2 14-5 19z" fill="#f8c070" stroke="#c87828" />
        <path d="M11 28L3 13M14 28L9 6M17 28l1-24M20 28l6-20M22 28l8-13" stroke="#fff0d0" strokeWidth="1.500" />
        <path d="M21 13l2 6 7 0-5 4 2 7-6-4-6 4 2-7-5-4h7z" fill="#f08828" stroke="#b85808" />
      </>
    ),
  },
  {
    name: "Notes",
    icon: (
      <>
        <path d="M4 2h24v28H4z" fill="#eaf6ff" />
        <path d="M6 6h20M6 11h20M6 16h20M6 21h20M6 26h20" stroke="#3f9ad8" strokeWidth="2.500" />
      </>
    ),
  },
  {
    name: "Genesis",
    icon: (
      <text x="16" y="29" textAnchor="middle" fill="#d82c20" className="font-['Inter'] text-[34px] font-black italic">
        G
      </text>
    ),
  },
  {
    name: "Pcb",
    icon: (
      <>
        <path d="M4 3l14-2v6H9v20H4z" fill="none" stroke="#159a4a" strokeWidth="1.500" />
        <path d="M10 8c20-6 26 16 6 16v7l-6-4z" fill="#149848" />
        <path d="M16 13v5" stroke="#1c3c60" strokeWidth="3" />
      </>
    ),
  },
  {
    name: "Commander",
    icon: (
      <>
        <path d="M1 1h27l3 3v27H1z" fill="#2038c8" />
        <path d="M8 1h15v9H8z" fill="#e8e8f0" />
        <path d="M17 2h4v7h-4z" fill="#2038c8" />
        <path d="M4 14h24v17H4z" fill="#fff" />
        <path d="M6 18h20M6 22h20" stroke="#c03030" />
        <text x="15" y="30" className="font-['Liberation_Mono'] text-[8px] font-bold">64</text>
      </>
    ),
  },
  { name: "Word", icon: officeGrid("#2b579a", "W") },
  { name: "Excel", icon: officeGrid("#2e8b3e", "X") },
  { name: "Toolkit", icon: gadget },
  {
    name: "X server",
    active: true,
    icon: (
      <>
        <path d="M2 2h7l21 28h-7z" fill="#7a0c8c" stroke="#fff" />
        <path d="M28 2L4 30" stroke="#fff" strokeWidth="3.500" />
        <path d="M28 2L4 30" stroke="#4a0658" strokeWidth="2" />
      </>
    ),
  },
  { name: "Toolkit 2", icon: gadget },
  {
    name: "DingTalk",
    icon: (
      <>
        <rect x="1" y="1" width="30" height="30" rx="7" fill="#1590fa" />
        <path d="M9 5c8 4 14 6 14 12-1 3-2 4-4 7l-4 4 1-5c-4-1-5-3-5-6-2-3-2-7-2-12z" fill="#fff" />
      </>
    ),
  },
];

function Taskbar() {
  return (
    <footer className="flex h-10 shrink-0 items-center border-t border-[#9fb2cc] bg-linear-to-b from-[#6f87ac] via-[#1e3f6e] via-35% to-[#0c2c58]">
      <button aria-label="Start" className="ml-2 shrink-0">
        <svg width="38" height="38" viewBox="0 0 38 38">
          <circle cx="19" cy="19" r="18" fill="#2a5f9c" stroke="#9cc4e8" strokeWidth="1.500" />
          <ellipse cx="19" cy="12" rx="14" ry="9" fill="#fff" opacity="0.3" />
          <path d="M11 11q4-3 8-1l-2 8q-4-2-8 0z" fill="#e8602c" />
          <path d="M20 11q4 2 9-1l-2 8q-5 3-9 1z" fill="#8cc43c" />
          <path d="M8 20q5-2 9 0l-2 8q-4-2-9 0z" fill="#38a0e0" />
          <path d="M18 20q4 2 9-1l-2 8q-5 3-9 1z" fill="#f8c838" />
        </svg>
      </button>
      <div className="ml-[14px] flex gap-1">
        {TASKS.map((task) => (
          <button
            key={task.name}
            aria-label={task.name}
            className={`flex h-[38px] w-[58px] items-center justify-center rounded-sm border border-[#a4b6d0] ${
              task.active
                ? "bg-linear-to-b from-[#c0ccdc] to-[#8094b4]"
                : "bg-linear-to-b from-[#8297b8] via-[#48648e] via-45% to-[#24446f]"
            }`}
          >
            <svg width="30" height="30" viewBox="0 0 32 32">
              {task.icon}
            </svg>
          </button>
        ))}
      </div>
      <div className="ml-auto flex items-center gap-3">
        <svg width="192" height="32" viewBox="0 0 192 32" aria-label="Notification area">
          <rect x="4" y="12" width="14" height="9" fill="#d8d8d8" stroke="#666" />
          <path d="M6 15h10M6 18h10" stroke="#555" strokeDasharray="1 1" />
          <path d="M7 11c0-4 8 0 9-5" stroke="#ccc" fill="none" />
          <circle cx="34" cy="13" r="7" fill="#1c30c0" stroke="#c8d0f0" />
          <text x="34" y="18" textAnchor="middle" fill="#fff" className="font-['Liberation_Sans'] text-[12px] font-bold">?</text>
          <path d="M52 9h5v3h-5zM54 9V6h6v4h-3" fill="none" stroke="#fff" />
          <path d="M53 18h6l-3 3zM71 18h7l-3.500-4z" fill="#fff" />
          <path d="M91 22l10-12 2 4-2 8z" fill="#f01818" />
          <path d="M101 16l2-2 6 8z" fill="#18d040" />
          <path d="M122 11v13" stroke="#fff" strokeWidth="1.500" />
          <path d="M124 11q4-2 9 1v6q-5-2-9 0z" fill="#fff" />
          <circle cx="132" cy="20" r="4.500" fill="#e02828" />
          <path d="M130 18l4 4M134 18l-4 4" stroke="#fff" />
          <path d="M145 15h3l4-4v13l-4-4h-3z" fill="#fff" />
          <path d="M154 15q2 3 0 5M157 13q3 5 0 9" stroke="#fff" fill="none" />
          <path d="M173 12h10v8h-12M175 24h8M179 20v4" stroke="#fff" strokeWidth="1.500" fill="none" />
          <path d="M169 10h5v4h-5zM171 14v6" stroke="#fff" fill="none" />
        </svg>
        <div className={`${SANS} text-center text-xs leading-[18px] text-white`}>
          <p>18:59</p>
          <p>2023/5/12</p>
        </div>
        <button aria-label="Show desktop" className="-ml-1 h-[38px] w-[14px] border border-[#8ca4c4] bg-[#35557f]" />
      </div>
    </footer>
  );
}

export default function App() {
  return (
    <div className="relative flex h-screen w-full flex-col overflow-hidden bg-black text-black">
      <TitleBar />
      <div className="flex min-h-0 flex-1">
        <div className="w-[9px] shrink-0 border-x border-l-[#5878a8] border-r-[#4a6a78] bg-linear-to-b from-[#a8bce0] via-[#9cc0f0] to-[#a8c8f4]" />
        <div className="flex min-w-0 flex-1 flex-col">
          <MenuBar />
          <div className="flex min-h-0 flex-1">
            <LeftPanel />
            <main className="relative min-w-0 flex-1 overflow-hidden bg-black">
              <Board />
            </main>
            <RightPanel />
          </div>
          <StatusRow />
          <div className="h-[23px] shrink-0 border-t-3 border-[#7c9494] bg-[#b4ffff]" />
        </div>
      </div>
      <Taskbar />
      <Popview
        title="Popview - 1"
        frame="top-[287px] left-[1065px] h-[433px] w-[759px]"
        closeClass="bg-[#70757c] text-white"
      >
        <LegendView />
      </Popview>
      <Popview
        title="Popview - 2"
        frame="top-[454px] left-[252px] h-[331px] w-[539px]"
        closeClass="bg-linear-to-b from-[#d89888] via-[#b83020] to-[#d86048]"
      >
        <DetailView />
      </Popview>
    </div>
  );
}
